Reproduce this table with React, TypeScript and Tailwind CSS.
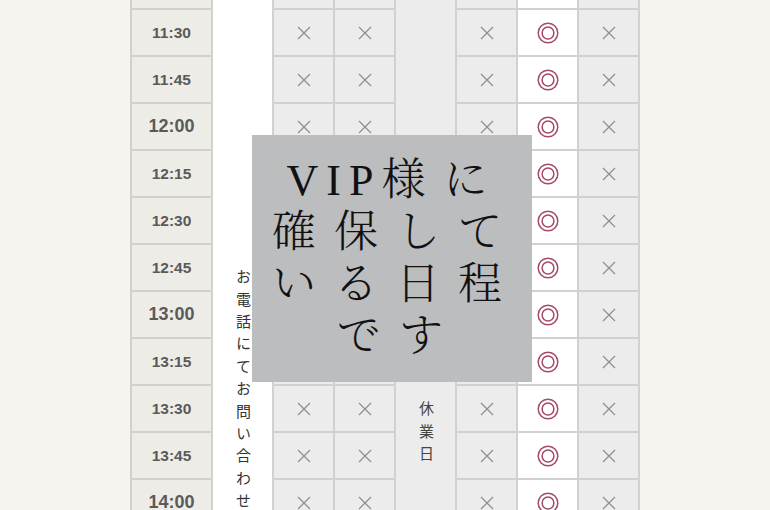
import { FC } from 'react';

const times = [
  '11:15', '11:30', '11:45', '12:00', '12:15', '12:30',
  '12:45', '13:00', '13:15', '13:30', '13:45', '14:00',
];

// status per column (3,4,6,7,8) - 休業日 and 電話 columns span all rows
const slots: ('x' | 'o')[] = ['x', 'x', 'x', 'o', 'x'];

const Cross: FC = () => (
  <svg width="14" height="14" viewBox="0 0 14 14">
    <path d="M1 1 L13 13 M13 1 L1 13" stroke="#8e8e8e" strokeWidth="1.2" fill="none" />
  </svg>
);

const DoubleCircle: FC = () => (
  <svg width="22" height="22" viewBox="0 0 22 22">
    <circle cx="11" cy="11" r="9.8" stroke="#a44a6a" strokeWidth="1.5" fill="none" />
    <circle cx="11" cy="11" r="5.9" stroke="#a44a6a" strokeWidth="1.5" fill="none" />
  </svg>
);

const SlotCell: FC<{ kind: 'x' | 'o' }> = ({ kind }) => (
  <div
    className={
      kind === 'o'
        ? 'flex items-center justify-center bg-white'
        : 'flex items-center justify-center bg-[#ececec]'
    }
  >
    {kind === 'o' ? <DoubleCircle /> : <Cross />}
  </div>
);

const App: FC = () => {
  return (
    <div className="relative w-[770px] h-[510px] overflow-hidden bg-[#f5f4ee] font-['Liberation_Sans','Noto_Sans_CJK_JP',sans-serif]">
      <div className="ml-[130px] mt-[-37px] w-[510px] grid grid-cols-[79px_repeat(7,59px)] auto-rows-[45px] gap-[2px] px-[2px] bg-[#d1d1d0]">
        <div className="col-start-2 row-start-1 row-span-12 flex justify-center overflow-hidden bg-white pt-[306px]">
          <span className="[writing-mode:vertical-rl] whitespace-nowrap text-[15px] leading-none tracking-[7.4px] text-[#333]">
            お電話にてお問い合わせ
          </span>
        </div>
        <div className="col-start-5 row-start-1 row-span-12 flex justify-center bg-[#ececec] pt-[438px]">
          <span className="[writing-mode:vertical-rl] whitespace-nowrap text-[15px] leading-none tracking-[7.4px] text-[#444]">
            休業日
          </span>
        </div>

        {times.map((t) => {
          const isHour = t.endsWith(':00');
          return [
            <div
              key={t}
              className={
                isHour
                  ? 'flex items-center justify-center bg-[#eeece7] text-[18px] font-bold text-[#5a5a5a]'
                  : 'flex items-center justify-center bg-[#eeece7] text-[15.5px] font-bold text-[#5a5a5a]'
              }
            >
              {t}
            </div>,
            ...slots.map((s, i) => <SlotCell key={t + i} kind={s} />),
          ];
        })}
      </div>

      <div className="absolute left-[252px] top-[135px] w-[280px] h-[247px] bg-[#bcbdbf] flex flex-col items-center justify-center text-[#111] font-['Liberation_Serif','Noto_Serif_CJK_JP','Noto_Sans_CJK_JP',serif] font-light text-[44px] leading-[52px] tracking-[18px]">
        <p className="pl-[8px]">
          <span className="tracking-[8px]">VIP</span>様に
        </p>
        <p className="pl-[8px]">確保して</p>
        <p className="pl-[8px]">いる日程</p>
        <p className="pl-[14px]">です</p>
      </div>
    </div>
  );
};

export default App;
